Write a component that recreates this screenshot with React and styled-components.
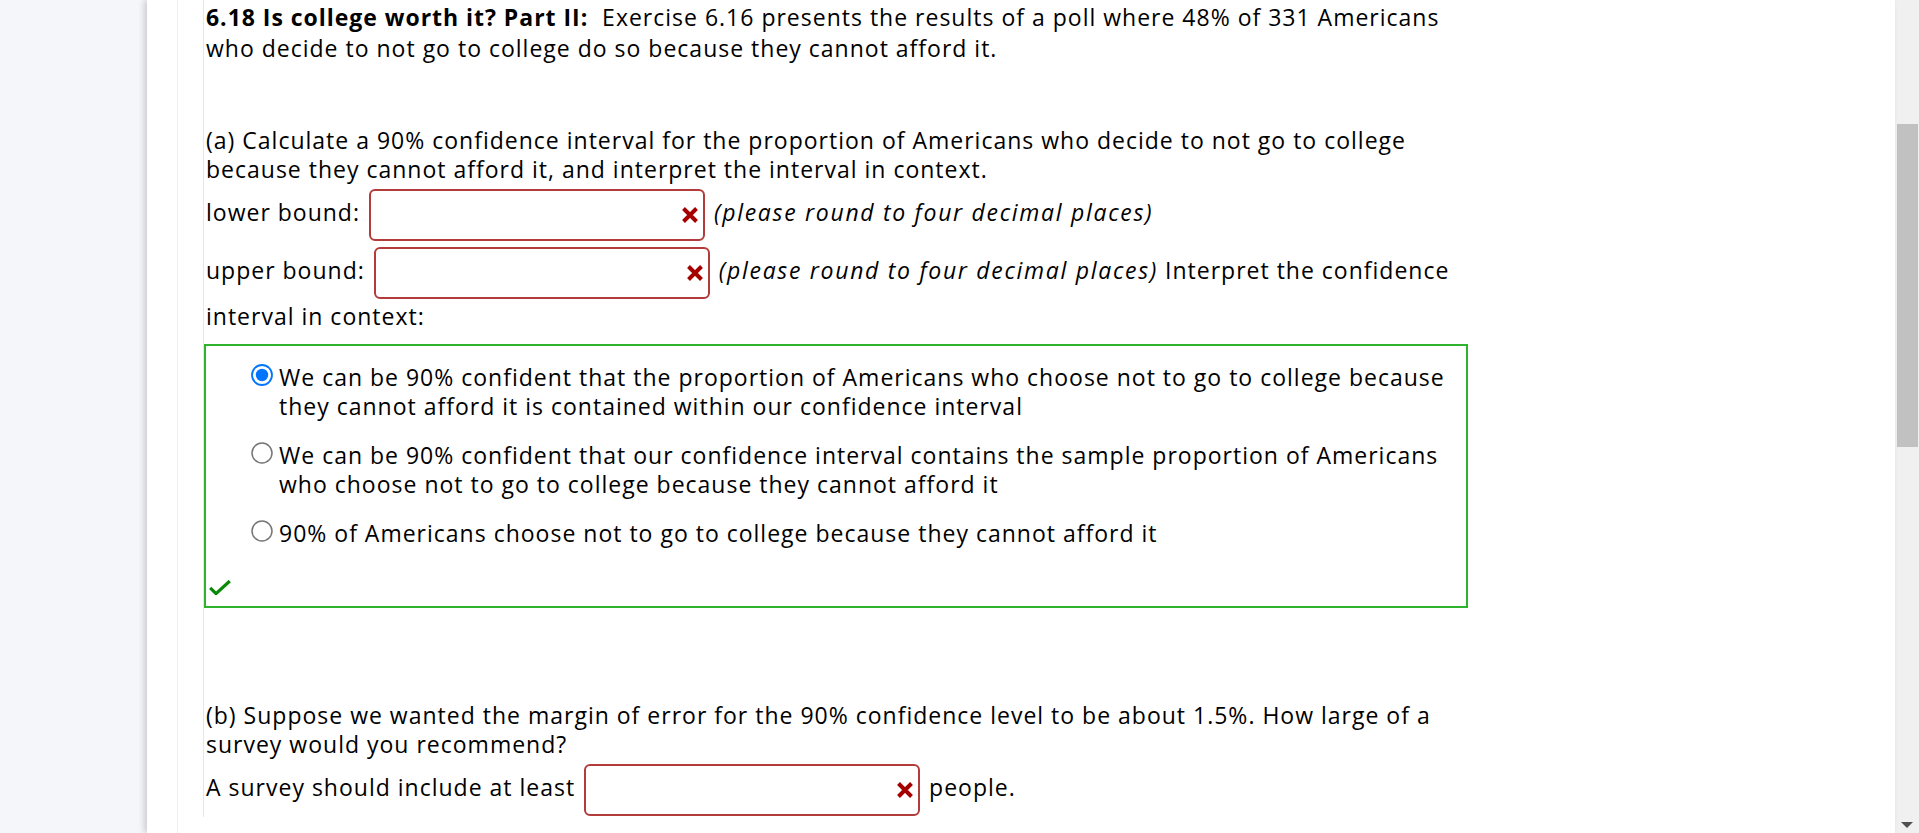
import React from "react";
import styled, { createGlobalStyle } from "styled-components";

const GlobalStyle = createGlobalStyle`
  html, body { margin: 0; padding: 0; height: 100%; overflow: hidden; }
  body {
    font-family: "Open Sans", "Noto Sans", sans-serif;
    color: #000;
    background: #f5f6fa;
  }
`;

const Page = styled.div`
  display: flex;
  width: 1919px;
  height: 833px;
  overflow: hidden;
`;

const Gutter = styled.aside`
  flex: none;
  width: 147px;
  background: #f5f6fa;
`;

const Sheet = styled.main`
  flex: 1;
  display: flex;
  background: #fff;
  box-shadow: -3px 0 6px rgba(0, 0, 0, 0.16);
  position: relative;
  z-index: 1;
`;

const Rail = styled.div`
  flex: none;
  width: 30px;
  border-right: 1px solid #eef0f4;
`;

const Column = styled.div`
  flex: none;
  margin-left: 25px;
  width: 1262px;
  height: 815px;
  padding: 2px 0 0 2px;
  border-left: 1px solid #e6e6e6;
  font-size: 23px;
  letter-spacing: 1px;
`;

const Title = styled.p`
  margin: 0;
  line-height: 31px;
  white-space: nowrap;
  b { font-weight: 700; letter-spacing: 0.97px; }
`;

const Prompt = styled.p`
  margin: ${(p) => p.$top}px 0 0;
  line-height: ${(p) => p.$lh || 29}px;
  white-space: nowrap;
`;

const AnswerLine = styled.div`
  margin-top: ${(p) => p.$top || 0}px;
  line-height: 28px;
  white-space: nowrap;
`;

const Hint = styled.i`
  font-style: italic;
  letter-spacing: 1.7px;
`;

const Box = styled.span`
  display: inline-flex;
  box-sizing: border-box;
  width: 336px;
  height: 52px;
  margin: 3px 2px;
  padding-right: 4px;
  vertical-align: middle;
  justify-content: flex-end;
  align-items: center;
  border: 2px solid #b23b3b;
  border-radius: 6px;
  background: #fff;
`;

const XMark = () => (
  <svg width="18" height="18" viewBox="0 0 18 18" aria-hidden="true">
    <path d="M2.5 2.5 L15.5 15.5 M15.5 2.5 L2.5 15.5" stroke="#a50000" strokeWidth="4" fill="none" />
  </svg>
);

const AnswerBox = () => (
  <Box>
    <XMark />
  </Box>
);

const ChoiceBox = styled.div`
  margin: 14px 0 0 -2px;
  width: 1264px;
  box-sizing: border-box;
  border: 2px solid #2fb32f;
  padding: 17px 0 11px 0;
`;

const ChoiceList = styled.div`
  display: flex;
  flex-direction: column;
  gap: 20px;
  padding-left: 45px;
`;

const Choice = styled.label`
  display: flex;
  align-items: flex-start;
  gap: 6px;
  line-height: 29px;
  white-space: nowrap;
`;

const RadioIcon = styled.svg`
  flex: none;
  margin-top: 1px;
`;

const Radio = ({ checked }) => (
  <RadioIcon width="22" height="22" viewBox="0 0 22 22" aria-hidden="true">
    {checked ? (
      <>
        <circle cx="11" cy="11" r="10" fill="#fff" stroke="#0075ff" strokeWidth="1.8" />
        <circle cx="11" cy="11" r="6.2" fill="#0075ff" />
      </>
    ) : (
      <circle cx="11" cy="11" r="10" fill="#fff" stroke="#767676" strokeWidth="1.5" />
    )}
  </RadioIcon>
);

const CheckIcon = styled.svg`
  display: block;
  margin: 32px 0 0 3px;
`;

const Check = () => (
  <CheckIcon width="22" height="15" viewBox="0 0 22 15" aria-hidden="true">
    <path d="M1.2 7.8 L7 13.6 L20.8 1" stroke="#088a08" strokeWidth="3.2" fill="none" />
  </CheckIcon>
);

const Scrollbar = styled.div`
  flex: none;
  width: 24px;
  background: #f0f0f0;
  display: flex;
  flex-direction: column;
  align-items: flex-end;
`;

const Thumb = styled.div`
  margin-top: 124px;
  width: 21px;
  margin-right: 1px;
  height: 323px;
  background: #c1c1c1;
`;

const DownArrow = styled.div`
  margin: auto 6px 5px 0;
  width: 0;
  height: 0;
  border-left: 6px solid transparent;
  border-right: 6px solid transparent;
  border-top: 6px solid #505050;
`;

export default function App() {
  return (
    <>
      <GlobalStyle />
      <Page>
        <Gutter />
        <Sheet>
          <Rail />
          <Column>
            <Title>
              <b>6.18 Is college worth it? Part II:</b>&nbsp; Exercise 6.16 presents the results of a poll where 48% of 331 Americans
              <br />
              who decide to not go to college do so because they cannot afford it.
            </Title>
            <Prompt $top={62}>
              (a) Calculate a 90% confidence interval for the proportion of Americans who decide to not go to college
              <br />
              because they cannot afford it, and interpret the interval in context.
            </Prompt>
            <AnswerLine $top={2}>
              lower bound: <AnswerBox /> <Hint>(please round to four decimal places)</Hint>
            </AnswerLine>
            <AnswerLine>
              upper bound: <AnswerBox /> <Hint>(please round to four decimal places)</Hint> Interpret the confidence
              <br />
              interval in context:
            </AnswerLine>
            <ChoiceBox>
              <ChoiceList>
                <Choice>
                  <Radio checked />
                  <span>
                    We can be 90% confident that the proportion of Americans who choose not to go to college because
                    <br />
                    they cannot afford it is contained within our confidence interval
                  </span>
                </Choice>
                <Choice>
                  <Radio />
                  <span>
                    We can be 90% confident that our confidence interval contains the sample proportion of Americans
                    <br />
                    who choose not to go to college because they cannot afford it
                  </span>
                </Choice>
                <Choice>
                  <Radio />
                  <span>90% of Americans choose not to go to college because they cannot afford it</span>
                </Choice>
              </ChoiceList>
              <Check />
            </ChoiceBox>
            <Prompt $top={93} $lh={29}>
              (b) Suppose we wanted the margin of error for the 90% confidence level to be about 1.5%. How large of a
              <br />
              survey would you recommend?
            </Prompt>
            <AnswerLine $top={2}>
              A survey should include at least <AnswerBox /> people.
            </AnswerLine>
          </Column>
        </Sheet>
        <Scrollbar>
          <Thumb />
          <DownArrow />
        </Scrollbar>
      </Page>
    </>
  );
}
